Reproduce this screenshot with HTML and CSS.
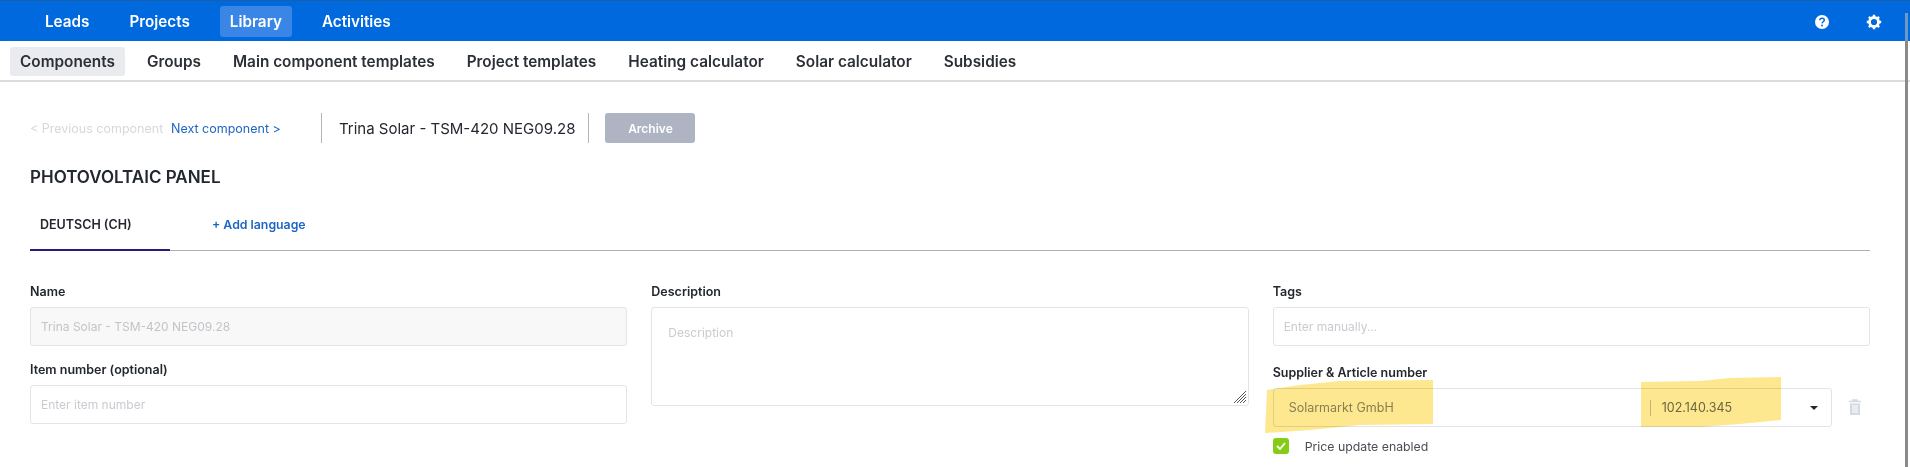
FILE: index.html
```html
<!DOCTYPE html>
<html lang="en">
<head>
<meta charset="utf-8">
<title>Trina Solar - TSM-420 NEG09.28</title>
<link rel="stylesheet" href="styles.css">
</head>
<body>
<header class="topbar">
	<nav class="mainnav">
		<a>Leads</a>
		<a>Projects</a>
		<a class="select">Library</a>
		<a>Activities</a>
	</nav>
	<div class="topicons">
		<svg width="16" height="16" viewBox="0 0 16 16"><circle cx="8" cy="8" r="7" fill="#fff"/><path d="M5.8 6.300c.1-1.400 1.100-2.100 2.300-2.100 1.300 0 2.200.8 2.200 1.900 0 1.700-2.100 1.600-2.200 3.300" fill="none" stroke="#0069de" stroke-width="1.500"/><circle cx="8" cy="11.500" r="1" fill="#0069de"/></svg>
		<svg width="16" height="16" viewBox="0 0 16 16"><circle cx="8" cy="8" r="4.500" fill="none" stroke="#fff" stroke-width="2.800"/><path d="M8 .8v3M8 12.200v3M.8 8h3M12.200 8h3M2.900 2.900l2.100 2.100M11 11l2.100 2.100M2.900 13.100L5 11M11 5l2.100-2.100" stroke="#fff" stroke-width="2.400"/></svg>
	</div>
</header>
<nav class="subnav">
	<a class="select">Components</a>
	<a>Groups</a>
	<a>Main component templates</a>
	<a>Project templates</a>
	<a>Heating calculator</a>
	<a>Solar calculator</a>
	<a>Subsidies</a>
</nav>
<main class="page">
	<div class="headrow">
		<span class="prev">&lt; Previous component</span>
		<a class="next">Next component &gt;</a>
		<h1 class="title">Trina Solar - TSM-420 NEG09.28</h1>
		<button class="archive">Archive</button>
	</div>
	<h2 class="kind">PHOTOVOLTAIC PANEL</h2>
	<div class="tabs">
		<div class="tab">DEUTSCH (CH)</div>
		<a class="addlang">+ Add language</a>
	</div>
	<div class="form">
		<div class="col">
			<label>Name</label>
			<div class="field disabled">Trina Solar - TSM-420 NEG09.28</div>
			<label class="second">Item number (optional)</label>
			<div class="field empty">Enter item number</div>
		</div>
		<div class="col">
			<label>Description</label>
			<div class="field area empty">
				Description
				<svg class="grip" width="14" height="14" viewBox="0 0 14 14"><path d="M1 13L13 1M4 13l9-9M7 13l6-6M10 13l3-3" stroke="#555" stroke-width="1"/></svg>
			</div>
		</div>
		<div class="col">
			<label>Tags</label>
			<div class="field empty">Enter manually...</div>
			<label class="third">Supplier &amp; Article number</label>
			<div class="supplier">
				<div class="field select-field">
					<span class="supname">Solarmarkt GmbH</span>
					<span class="artno">102.140.345</span>
					<span class="caret"></span>
				</div>
				<svg class="trash" width="14" height="17" viewBox="0 0 14 17"><path d="M1 2.500h12M5 2.500V1h4v1.500" fill="none" stroke="#d5d9e2" stroke-width="1.500"/><path d="M2 4.500h10V16H2z" fill="#d5d9e2"/><path d="M5 6v8M7 6v8M9 6v8" stroke="#fff"/></svg>
			</div>
			<div class="check">
				<span class="box"><svg width="10" height="8" viewBox="0 0 10 8"><path d="M1 4l3 3 5-6" fill="none" stroke="#fff" stroke-width="1.800"/></svg></span>
				Price update enabled
			</div>
		</div>
	</div>
</main>
<!-- marker strokes drawn over the screenshot -->
<svg class="marker" width="1910" height="467" viewBox="0 0 1910 467">
	<path d="M1267 390L1300 385 1340 381 1433 380V424L1360 425 1310 430 1265 433Z" fill="#fde78f"/>
	<path d="M1641 382L1700 381 1730 378 1781 377V420L1740 424 1700 427H1641Z" fill="#fde78f"/>
</svg>
<div class="scrollline"></div>
</body>
</html>
```
FILE: styles.css
```css
* {
	box-sizing: border-box;
	margin: 0;
	padding: 0;
}
html, body {
	height: 467px;
	overflow: hidden;
}
body {
	position: relative;
	background: #fff;
	color: #23272e;
	font: 14px "Inter", "Liberation Sans", sans-serif;
}
.topbar {
	display: flex;
	align-items: center;
	justify-content: space-between;
	height: 41px;
	padding: 1px 0 0 35px;
	background: #0069de;
	border-top: 1px solid #1b5fa8;
}
.mainnav {
	display: flex;
	gap: 20px;
}
.mainnav a {
	padding: 0 10px;
	height: 31px;
	line-height: 31px;
	color: #fff;
	font-size: 15.25px;
	font-weight: 600;
	border-radius: 3px;
}
.mainnav a.select {
	background: #3a86e6;
}
.topicons {
	display: flex;
	gap: 36px;
	padding-right: 28px;
}
.subnav {
	display: flex;
	gap: 12px;
	align-items: center;
	height: 41px;
	padding: 1px 0 0 10px;
	border-bottom: 2px solid #dcdcdc;
}
.subnav a {
	padding: 0 10px;
	height: 29px;
	line-height: 29px;
	font-size: 15.35px;
	font-weight: 600;
	border-radius: 3px;
	color: #2b2f36;
}
.subnav a.select {
	background: #e9ebee;
}
.page {
	padding: 31px 40px 0 30px;
}
.headrow {
	display: flex;
	align-items: center;
	height: 30px;
	font-size: 12.5px;
}
.prev {
	width: 141px;
	color: #d6d8dc;
}
.next {
	width: 150px;
	color: #1c66c4;
}
.title {
	display: flex;
	align-items: center;
	height: 30px;
	padding: 0 13px 0 17px;
	font-size: 15px;
	font-weight: 400;
	border-left: 1px solid #b5b5b5;
	border-right: 1px solid #b5b5b5;
}
.archive {
	width: 90px;
	height: 30px;
	margin-left: 16px;
	border: 0;
	border-radius: 3px;
	background: #aeb4c2;
	color: #fff;
	font: 600 12px "Inter", "Liberation Sans", sans-serif;
}
.kind {
	margin-top: 24px;
	font-size: 17px;
	font-weight: 600;
	line-height: 20px;
}
.tabs {
	display: flex;
	align-items: center;
	height: 55px;
	margin-top: 9px;
	border-bottom: 1px solid #b0b0b0;
}
.tab {
	width: 140px;
	height: 55px;
	margin-bottom: -1px;
	padding: 21px 0 0 10px;
	font-size: 12.5px;
	font-weight: 600;
	border-bottom: 2px solid #2a1a7e;
}
.addlang {
	margin: 3px 0 0 42px;
	font-size: 12.3px;
	font-weight: 600;
	color: #1c66c4;
}
.form {
	display: grid;
	grid-template-columns: repeat(3, 1fr);
	gap: 24px;
	margin-top: 33px;
}
label {
	display: block;
	height: 16px;
	line-height: 16px;
	margin-bottom: 7px;
	font-size: 12.5px;
	font-weight: 600;
}
label.second {
	margin-top: 16px;
}
label.third {
	margin-top: 19px;
}
.field {
	height: 39px;
	line-height: 37px;
	padding: 0 10px;
	font-size: 12px;
	border: 1px solid #e2e4e8;
	border-radius: 3px;
}
.empty {
	color: #c9cbd0;
}
.disabled {
	background: #f8f8f8;
	color: #c2c4c8;
}
.area {
	position: relative;
	height: 99px;
	line-height: 50px;
	padding: 0 16px;
}
.grip {
	position: absolute;
	right: 1px;
	bottom: 1px;
}
.supplier {
	display: flex;
	align-items: center;
	gap: 16px;
}
.select-field {
	display: flex;
	align-items: center;
	width: 559px;
	padding: 0 13px 0 15px;
	font-size: 12.5px;
	color: #6e7079;
}
.supname {
	width: 361px;
	color: #8b8c90;
}
.artno {
	flex: 1;
	height: 16px;
	line-height: 16px;
	padding-left: 11px;
	border-left: 1px solid #c4c6cb;
}
.caret {
	width: 0;
	height: 0;
	border: 4px solid transparent;
	border-top: 4px solid #22262c;
	border-bottom: 0;
}
.check {
	display: flex;
	align-items: center;
	gap: 16px;
	margin-top: 11px;
	font-size: 12.3px;
	color: #4a4d55;
}
.box {
	display: flex;
	align-items: center;
	justify-content: center;
	width: 16px;
	height: 16px;
	background: #84cc16;
	border-radius: 3px;
}
/* overlays */
.marker {
	position: absolute;
	left: 0;
	top: 0;
	mix-blend-mode: multiply;
	pointer-events: none;
}
.scrollline {
	position: absolute;
	top: 13px;
	right: 2px;
	bottom: 0;
	width: 3px;
	background: linear-gradient(#6f98c8 28px, #8a8a8a 28px);
}
```
